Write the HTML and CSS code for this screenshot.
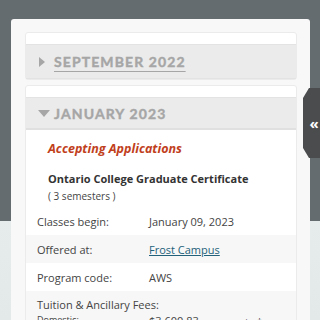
FILE: index.html
```html
<!DOCTYPE html>
<html lang="en">
<head>
  <meta charset="UTF-8" />
  <meta name="viewport" content="width=device-width, initial-scale=1.0" />
  <title>Program Dates</title>
  <link rel="stylesheet" href="styles.css">
</head>
<body>
  <div class="modal">
    <!-- Collapsed intake -->
    <div class="intake">
      <div class="intake-head">
        <a class="intake-title" href="#"><span class="arrow right"></span>SEPTEMBER 2022</a>
      </div>
    </div>
    <!-- Open intake -->
    <div class="intake open">
      <div class="intake-head">
        <span class="intake-title"><span class="arrow down"></span>JANUARY 2023</span>
      </div>
      <div class="intake-body">
        <div class="status">Accepting Applications</div>
        <div class="credential">Ontario College Graduate Certificate</div>
        <div class="duration">( 3 semesters )</div>
      </div>
      <div class="details">
        <div class="row">
          <div class="label">Classes begin:</div>
          <div class="value">January 09, 2023</div>
        </div>
        <div class="row alt">
          <div class="label">Offered at:</div>
          <div class="value"><a href="#">Frost Campus</a></div>
        </div>
        <div class="row">
          <div class="label">Program code:</div>
          <div class="value">AWS</div>
        </div>
        <div class="row alt fees">
          <div class="label wide">Tuition &amp; Ancillary Fees:</div>
          <div class="fee-line">
            <div class="label small">Domestic:</div>
            <div class="value">$3,600.83 <span class="small">per semester†</span></div>
          </div>
        </div>
      </div>
    </div>
  </div>
  <div class="side-tab">&laquo;</div>
</body>
</html>
```
FILE: styles.css
```css
* {
  margin: 0;
  padding: 0;
  box-sizing: border-box;
}
body {
  height: 320px;
  overflow: hidden;
  font-family: 'Open Sans', sans-serif;
  color: #333;
  background: linear-gradient(#646c70 0, #646c70 221px, #e6ebeb 221px, #e3e9e9 100%);
  padding: 19px 10px 0 11px;
}
/* Modal shell */
.modal {
  background: #f8f8f8;
  border-radius: 3px;
  padding: 13px 13px 0 14px;
  height: 320px;
  display: flex;
  flex-direction: column;
  gap: 5px;
}
.intake {
  background: #fff;
  border: 1px solid #ebebeb;
  border-radius: 3px;
  padding-top: 11px;
}
.intake-head {
  background: #ebebeb;
  border-top: 1px solid #e3e3e3;
  border-bottom: 1px solid #e3e3e3;
  height: 35px;
  display: flex;
  align-items: center;
  padding-left: 11px;
}
.intake.open .intake-head {
  border-bottom: 2px solid #e0e0e0;
  height: 33px;
  margin-bottom: 1px;
}
.intake-title {
  font-family: 'Lato', sans-serif;
  font-weight: 700;
  font-size: 14px;
  letter-spacing: 1.1px;
  color: #a6a6a6;
  -webkit-text-stroke: 0.4px #a6a6a6;
  text-decoration: none;
  display: flex;
  align-items: center;
}
a.intake-title {
  text-decoration: underline;
  text-underline-offset: 4px;
  text-decoration-thickness: 1px;
}
.arrow {
  display: inline-block;
  width: 0;
  height: 0;
  margin-right: 9px;
}
.arrow.right {
  border-top: 5px solid transparent;
  border-bottom: 5px solid transparent;
  border-left: 6px solid #a6a6a6;
  margin-left: 2px;
}
.arrow.down {
  border-left: 6px solid transparent;
  border-right: 6px solid transparent;
  border-top: 7px solid #a6a6a6;
  margin-left: 1px;
  margin-right: 4px;
}
/* Open intake content */
.intake-body {
  padding: 8px 12px 3px 22px;
}
.status {
  color: #c1401c;
  font-weight: 700;
  font-style: italic;
  font-size: 12.5px;
  line-height: 20px;
}
.credential {
  margin-top: 12px;
  font-weight: 700;
  font-size: 11px;
  line-height: 16px;
  color: #333;
}
.duration {
  margin-top: 1px;
  font-size: 10px;
  line-height: 16px;
  color: #444;
}
.row {
  display: flex;
  align-items: center;
  height: 28px;
  padding-left: 11px;
  font-size: 11px;
  color: #444;
}
.row.alt {
  background: #f7f7f7;
}
.label {
  width: 112px;
  flex-shrink: 0;
}
.value a {
  color: #23617a;
}
.fees {
  flex-direction: column;
  align-items: flex-start;
  justify-content: flex-start;
  height: auto;
  padding-top: 6px;
}
.label.wide {
  width: auto;
}
.fee-line {
  display: flex;
  margin-top: 1px;
}
.small {
  font-size: 9px;
}
/* Collapse tab on the right edge */
.side-tab {
  position: absolute;
  top: 88px;
  right: 0;
  width: 17px;
  height: 70px;
  background: #4a4c4e;
  clip-path: polygon(6px 0, 100% 0, 100% 100%, 6px 100%, 0 60px, 0 10px);
  color: #fff;
  font-weight: 700;
  font-size: 15px;
  display: flex;
  align-items: center;
  justify-content: center;
  padding-left: 5px;
}
```
